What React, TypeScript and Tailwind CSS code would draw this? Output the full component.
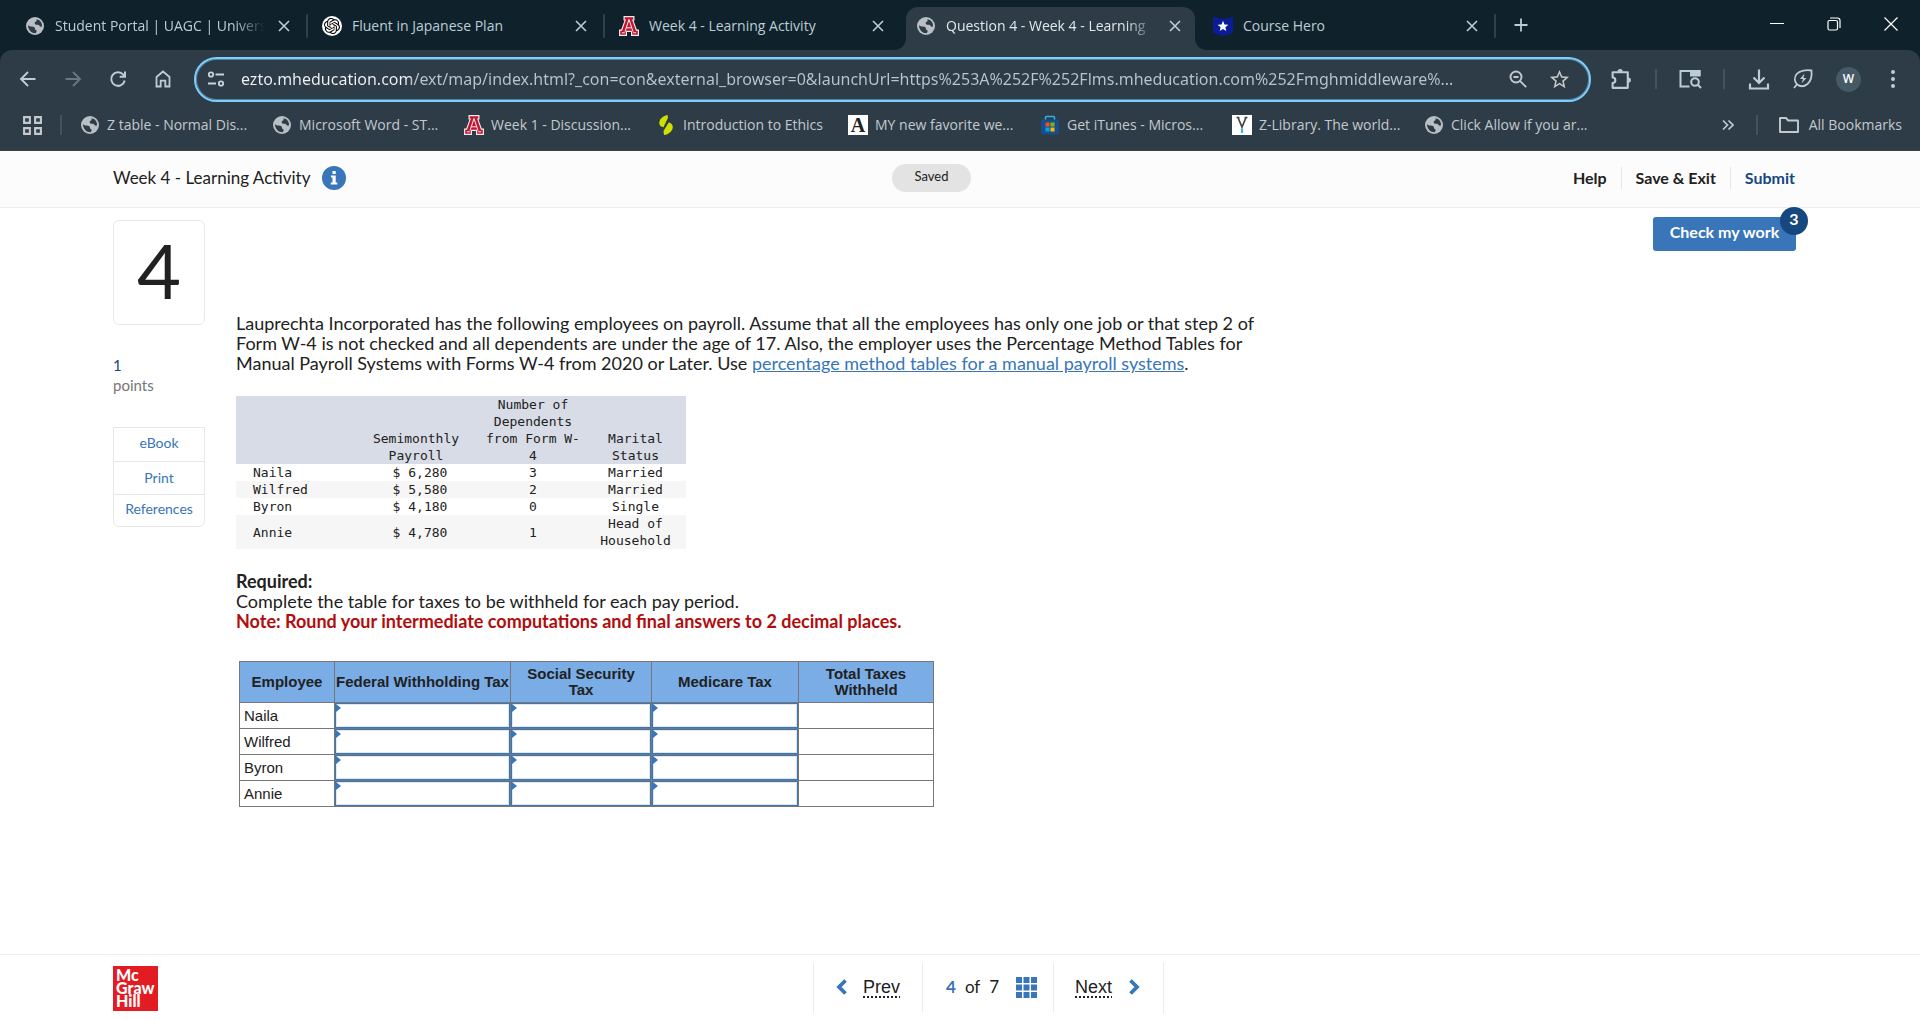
import React from "react";
import { SiOpenai } from "react-icons/si";
import { MdStarOutline } from "react-icons/md";

function Globe() {
  return (
    <svg viewBox="0 0 20 20" className="size-5 shrink-0">
      <circle cx="10" cy="10" r="9" fill="#b9bfc4" />
      <path
        d="M11.500 3.200c2 .3 4 1.500 4.900 3.500.6 1.300.8 2.500.5 3.800-.9.5-1.900.2-2.400-.6-.4-.8-1.100-1.100-2-1.100-1.500 0-2.700-.3-2.800-1.500-.1-1 .6-1.500 1.400-1.700.6-.2.500-1.300.4-2.400zM3 9.200c1.500 1.200 3.300 1.300 5 1.500 1.500.2 2 1 1.900 2 0 1 .8 1.200 1.400 1.600.7.500.3 1.600-.6 2.900-4.200.2-7.600-3.200-7.700-8z"
        fill="#2d3c47"
      />
    </svg>
  );
}

function ArizonaMark() {
  return (
    <svg viewBox="0 0 20 20" className="size-5 shrink-0" aria-hidden="true">
      <path d="M4.500 0h11v4.500h-1l3.300 9H20V20h-8v-4H8v4H0v-6.500h2.200l3.300-9h-1z" fill="#e9edf0" />
      <path d="M5.700 1.200h8.600v2.200H13l4 11.300h1.800v4.100h-5.600v-4H6.800v4H1.200v-4.100H3L7 3.400H5.700z" fill="#c4142e" />
      <path d="M10 3.500L6 15.500M10 3.500l4 12M7.500 11.800h5M2.800 16.800h3M14.200 16.800h3" stroke="#f4f4f4" strokeWidth="1" fill="none" />
    </svg>
  );
}

function CourseHero() {
  return (
    <svg viewBox="0 0 20 20" className="size-5 shrink-0">
      <path d="M0 1l10 2 10-2v16l-10 3-10-3z" fill="#0a1c96" />
      <path d="M10 4.800l1.500 3.600 3.900.3-3 2.500.9 3.800-3.300-2-3.300 2 .9-3.800-3-2.500 3.900-.3z" fill="#fff" />
    </svg>
  );
}

function SophiaLeaf() {
  return (
    <svg viewBox="0 0 20 20" className="size-5 shrink-0">
      <path d="M11.500 0C6.500 1 3 4.500 3.300 8.500c.2 2 1.500 3.300 4.200 3.800L12 2.800z" fill="#d0df00" />
      <path d="M8 20c5.500-.6 9-4.500 8.700-8.500-.2-2.200-1.500-3.400-4-4L7.500 16z" fill="#d0df00" />
    </svg>
  );
}

function StoreIcon() {
  return (
    <svg viewBox="0 0 20 20" className="size-5 shrink-0">
      <path d="M5.500 6V2.500a1 1 0 0 1 1-1h7a1 1 0 0 1 1 1V6" fill="none" stroke="#2fb4e8" strokeWidth="1.500" />
      <path d="M1 4.500h18V17a2.500 2.500 0 0 1-2.500 2.500h-13A2.500 2.500 0 0 1 1 17z" fill="#174f8c" />
      <path d="M5.500 7.500h4v4h-4z" fill="#f25022" />
      <path d="M10.500 7.500h4v4h-4z" fill="#7fba00" />
      <path d="M5.500 12.500h4v4h-4z" fill="#00a4ef" />
      <path d="M10.500 12.500h4v4h-4z" fill="#ffb900" />
    </svg>
  );
}

function LetterA() {
  return (
    <span className="flex size-5 shrink-0 items-center justify-center bg-white font-['Liberation_Serif',serif] text-xl font-bold text-[#222]">
      A
    </span>
  );
}

function ZLibrary() {
  return (
    <svg viewBox="0 0 20 20" className="size-5 shrink-0">
      <path d="M0 0h20v20H0z" fill="#fff" />
      <path d="M4.500 2.500h3M12.500 2.500h3M6 2.500l4 9.500 4-9.500" fill="none" stroke="#444" strokeWidth="1.700" />
      <path d="M10 13.500V18" stroke="#49afd0" strokeWidth="2.200" />
    </svg>
  );
}

function CloseX() {
  return (
    <svg viewBox="0 0 12 12" className="size-3" fill="none" stroke="currentColor" strokeWidth="1.600">
      <path d="M1 1l10 10M11 1L1 11" />
    </svg>
  );
}

const tabs = [
  { title: "Student Portal | UAGC | Universi", icon: <Globe />, sep: true },
  {
    title: "Fluent in Japanese Plan",
    icon: (
      <span className="flex size-5 shrink-0 items-center justify-center rounded-full bg-white text-black">
        <SiOpenai className="size-4" />
      </span>
    ),
    sep: true,
  },
  { title: "Week 4 - Learning Activity", icon: <ArizonaMark /> },
  { title: "Question 4 - Week 4 - Learning", icon: <Globe />, active: true },
  { title: "Course Hero", icon: <CourseHero />, sep: true },
];

const bookmarks = [
  { title: "Z table - Normal Dis...", icon: <Globe /> },
  { title: "Microsoft Word - ST...", icon: <Globe /> },
  { title: "Week 1 - Discussion...", icon: <ArizonaMark /> },
  { title: "Introduction to Ethics", icon: <SophiaLeaf /> },
  { title: "MY new favorite we...", icon: <LetterA /> },
  { title: "Get iTunes - Micros...", icon: <StoreIcon /> },
  { title: "Z-Library. The world...", icon: <ZLibrary /> },
  { title: "Click Allow if you ar...", icon: <Globe /> },
];

const payroll = [
  ["Naila", "$ 6,280", "3", "Married"],
  ["Wilfred", "$ 5,580", "2", "Married"],
  ["Byron", "$ 4,180", "0", "Single"],
  ["Annie", "$ 4,780", "1", "Head of Household"],
];

const employees = ["Naila", "Wilfred", "Byron", "Annie"];
const taxes = ["Federal Withholding Tax", "Social Security Tax", "Medicare Tax"];

function Tabs() {
  return (
    <div className="flex h-[50px] bg-[#0f222b] pl-[11px] text-sm text-[#bccdd6]">
      {tabs.map((t) => (
        <div key={t.title} className="relative flex w-[297px] min-w-0 items-center pt-[7px]">
          {t.active && (
            <div className="absolute inset-x-1 top-[7px] bottom-0 rounded-t-xl bg-[#2d3c47]">
              <svg viewBox="0 0 12 12" className="absolute bottom-0 -left-3 size-3">
                <path d="M12 0v12H0C7 12 12 7 12 0z" fill="#2d3c47" />
              </svg>
              <svg viewBox="0 0 12 12" className="absolute -right-3 bottom-0 size-3">
                <path d="M0 0v12h12C5 12 0 7 0 0z" fill="#2d3c47" />
              </svg>
            </div>
          )}
          <div className="relative flex w-full items-center pb-[6px] pl-[14px]">
            {t.icon}
            <button
              className={
                "ml-[10px] flex-1 overflow-hidden text-left whitespace-nowrap " +
                (t.active ? "text-[#e2e9ed] " : "") +
                (t.title.length > 26 ? "[mask-image:linear-gradient(90deg,#000_82%,transparent_96%)]" : "")
              }
            >
              {t.title}
            </button>
            <button aria-label={"Close " + t.title} className="mr-[18px] ml-1">
              <CloseX />
            </button>
          </div>
          {t.sep && <span className="absolute top-[14px] right-0 h-6 w-[2px] rounded bg-[#2f414c]" />}
        </div>
      ))}
      <button aria-label="New tab" className="ml-[18px]">
        <svg viewBox="0 0 14 14" className="size-[14px]" fill="none" stroke="currentColor" strokeWidth="1.800">
          <path d="M7 .5v13M.5 7h13" />
        </svg>
      </button>
      <div className="ml-auto flex items-center gap-[43px] pr-[22px] pb-[2px] text-white">
        <button aria-label="Minimize">
          <svg viewBox="0 0 14 14" className="size-[14px]" stroke="currentColor">
            <path d="M0 6.500h14" />
          </svg>
        </button>
        <button aria-label="Restore">
          <svg viewBox="0 0 14 14" className="size-[14px]" fill="none" stroke="currentColor" strokeWidth="1.200">
            <rect x="1" y="3.500" width="9.500" height="9.500" rx="1.500" />
            <path d="M3 1h7.500A2.500 2.500 0 0 1 13 3.500V11" />
          </svg>
        </button>
        <button aria-label="Close window">
          <svg viewBox="0 0 14 14" className="size-[14px]" fill="none" stroke="currentColor" strokeWidth="1.200">
            <path d="M.5.5l13 13M13.500.5l-13 13" />
          </svg>
        </button>
      </div>
    </div>
  );
}

function Toolbar() {
  const nav = "flex size-[45px] shrink-0 items-center justify-center";
  return (
    <div className="flex h-[58px] items-center pr-[15px] pl-[5px] text-[#bccdd6]">
      <button aria-label="Back" className={nav}>
        <svg viewBox="0 0 20 20" className="size-5" fill="none" stroke="currentColor" strokeWidth="1.900">
          <path d="M17.500 10H3.500M10 3l-7 7 7 7" />
        </svg>
      </button>
      <button aria-label="Forward" className={nav + " text-[#687780]"}>
        <svg viewBox="0 0 20 20" className="size-5" fill="none" stroke="currentColor" strokeWidth="1.900">
          <path d="M2.500 10h14M10 3l7 7-7 7" />
        </svg>
      </button>
      <button aria-label="Reload" className={nav}>
        <svg viewBox="0 0 20 20" className="size-5" fill="none" stroke="currentColor" strokeWidth="2">
          <path d="M16.700 11.500A6.800 6.800 0 1 1 15.300 5.700L17 7.500M17 2.500v5.300h-5.300" />
        </svg>
      </button>
      <button aria-label="Home" className={nav}>
        <svg viewBox="0 0 20 20" className="size-5" fill="none" stroke="currentColor" strokeWidth="1.800">
          <path d="M3.500 8L10 2.500 16.500 8v9.500h-4.200v-5.800H7.700v5.800H3.500z" />
        </svg>
      </button>
      <div className="ml-[9px] flex h-[45px] min-w-0 flex-1 items-center rounded-full border-[2px] border-[#7fcdfb] pr-[18px] pl-[10px] ring-1 ring-[#4d83a2] ring-inset">
        <button aria-label="View site information" className="shrink-0">
          <svg viewBox="0 0 20 20" className="size-5" fill="none" stroke="#c9d3d9" strokeWidth="1.800">
            <circle cx="5" cy="5.500" r="2.200" />
            <path d="M9.500 5.500H18M2 14.500h8" />
            <circle cx="15" cy="14.500" r="2.200" />
          </svg>
        </button>
        <input
          aria-label="Address"
          className="ml-[15px] min-w-0 flex-1 bg-[linear-gradient(90deg,#eef3f6_170px,#bcc5cb_170px)] bg-clip-text font-['Noto_Sans',sans-serif] text-base text-transparent outline-none"
          defaultValue="ezto.mheducation.com/ext/map/index.html?_con=con&external_browser=0&launchUrl=https%253A%252F%252Flms.mheducation.com%252Fmghmiddleware%..."
        />
        <button aria-label="Zoom" className="mr-5 ml-4">
          <svg viewBox="0 0 20 20" className="size-5" fill="none" stroke="#c4c9cd" strokeWidth="1.900">
            <circle cx="8" cy="8" r="5.500" />
            <path d="M12.200 12.200l6 6M5.500 8h5" />
          </svg>
        </button>
        <button aria-label="Bookmark this page">
          <MdStarOutline className="size-[23px] text-[#c4c9cd]" />
        </button>
      </div>
      <button aria-label="Extensions" className="ml-[19px]">
        <svg viewBox="0 0 22 22" className="size-[23px]" fill="none" stroke="currentColor" strokeWidth="2" strokeLinejoin="round">
          <path d="M2.500 4H17v15H2.500v-4.700a2.600 2.600 0 0 0 0-5.200z" />
          <path d="M7.200 3.500a2.500 2.500 0 0 1 5 0zM17.500 9a2.500 2.500 0 0 1 0 5z" fill="currentColor" stroke="none" />
        </svg>
      </button>
      <span className="ml-[22px] h-5 w-[2px] bg-[#42535f]" />
      <button aria-label="Search with Lens" className="ml-[21px]">
        <svg viewBox="0 0 24 24" className="size-6" fill="none" stroke="currentColor" strokeWidth="2">
          <path d="M21.500 9V4H2.500v15.500h9" />
          <path d="M12 3h10.500v6.500H12z" fill="currentColor" stroke="none" />
          <circle cx="17" cy="15" r="3.800" />
          <path d="M19.800 17.800l3.200 3.200" />
        </svg>
      </button>
      <span className="ml-[21px] h-5 w-[2px] bg-[#42535f]" />
      <button aria-label="Downloads" className="ml-[22px]">
        <svg viewBox="0 0 24 24" className="size-6" fill="none" stroke="currentColor" strokeWidth="2.200">
          <path d="M12 2.500v13M6.500 10.500l5.500 5.500 5.500-5.500M3 16.500v5h18v-5" />
        </svg>
      </button>
      <button aria-label="Memory saver" className="ml-[21px]">
        <svg viewBox="0 0 22 22" className="size-[22px]" fill="none" stroke="currentColor" strokeWidth="1.800">
          <path d="M19.500 2.500c-5-.8-12 0-14.800 3.500-2.700 3.400-2.300 7.500.2 10.300 3.300 2.600 7.300 2.400 10.600-.3 3.500-3 4.500-8.500 4-13.500zM5 16.300L2 20" />
          <path d="M12.500 5.500L8 11h3l-1.500 4.500L14.500 10h-3z" fill="currentColor" stroke="none" />
        </svg>
      </button>
      <button className="ml-[22px] flex size-[25px] items-center justify-center rounded-full bg-[#465a66] text-xs font-semibold text-white">W</button>
      <button aria-label="Menu" className="ml-[20px]">
        <svg viewBox="0 0 24 24" className="size-6" fill="currentColor">
          <circle cx="12" cy="5" r="2" />
          <circle cx="12" cy="12" r="2" />
          <circle cx="12" cy="19" r="2" />
        </svg>
      </button>
    </div>
  );
}

function Bookmarks() {
  return (
    <div className="flex h-[43px] items-center border-b border-[#3a3f4b] pr-[18px] pb-2 pl-[22px] text-sm text-[#c4c9cd]">
      <button aria-label="Apps">
        <svg viewBox="0 0 20 20" className="size-[21px]" fill="none" stroke="currentColor" strokeWidth="2">
          <path d="M2 2h5.500v5.500H2zM12.500 2H18v5.500h-5.500zM2 12.500h5.500V18H2zM12.500 12.500H18V18h-5.500z" />
        </svg>
      </button>
      <span className="mr-[18px] ml-[17px] h-5 w-[2px] shrink-0 bg-[#42535f]" />
      {bookmarks.map((b) => (
        <a key={b.title} href="#" className="flex w-[192px] min-w-0 items-center gap-[7px] whitespace-nowrap">
          {b.icon}
          {b.title}
        </a>
      ))}
      <button aria-label="More bookmarks" className="ml-auto">
        <svg viewBox="0 0 12 12" className="size-3" fill="none" stroke="currentColor" strokeWidth="1.700">
          <path d="M1 1.500L5.500 6 1 10.500M6.500 1.500L11 6l-4.500 4.500" />
        </svg>
      </button>
      <span className="mr-5 ml-[22px] h-5 w-[2px] bg-[#42535f]" />
      <button className="flex items-center gap-[9px]">
        <svg viewBox="0 0 22 18" className="h-[18px] w-[22px]" fill="none" stroke="currentColor" strokeWidth="1.900" strokeLinejoin="round">
          <path d="M2 2h6l2.200 2.500H20V16H2z" />
        </svg>
        All Bookmarks
      </button>
    </div>
  );
}

function PayrollTable() {
  return (
    <table className="mt-[23px] w-[450px] table-fixed border-collapse text-center font-['DejaVu_Sans_Mono',monospace] text-[13px] leading-[17px]">
      <colgroup>
        <col className="w-[115px]" />
        <col className="w-[130px]" />
        <col className="w-[104px]" />
        <col className="w-[101px]" />
      </colgroup>
      <thead className="bg-[#d8dce6] align-bottom">
        <tr>
          <td />
          <th className="px-5 font-normal">Semimonthly Payroll</th>
          <th className="px-1 font-normal">
            Number of Dependents from&nbsp;Form&nbsp;W-
            <br />4
          </th>
          <th className="px-5 font-normal">Marital Status</th>
        </tr>
      </thead>
      <tbody>
        {payroll.map((r) => (
          <tr key={r[0]} className="even:bg-[#f6f6f6]">
            <th scope="row" className="pl-[17px] text-left font-normal">{r[0]}</th>
            <td className="pl-2">{r[1]}</td>
            <td>{r[2]}</td>
            <td className="px-3">{r[3]}</td>
          </tr>
        ))}
      </tbody>
    </table>
  );
}

function TaxTable() {
  return (
    <table className="mt-[30px] ml-[3px] w-[695px] table-fixed border-collapse font-['Liberation_Sans',Arial,sans-serif] text-[15px] leading-4">
      <colgroup>
        <col className="w-[95px]" />
        <col className="w-[176px]" />
        <col className="w-[141px]" />
        <col className="w-[147px]" />
        <col className="w-[135px]" />
      </colgroup>
      <thead className="bg-[#7aace6]">
        <tr className="h-[41px]">
          <th className="border border-[#777]">Employee</th>
          <th className="border border-[#777] whitespace-nowrap">Federal Withholding Tax</th>
          <th className="border border-[#777] px-4">Social Security Tax</th>
          <th className="border border-[#777]">Medicare Tax</th>
          <th className="border border-[#777] px-5">Total Taxes Withheld</th>
        </tr>
      </thead>
      <tbody>
        {employees.map((e) => (
          <tr key={e} className="h-[26px]">
            <th scope="row" className="border border-[#777] pl-1 text-left font-normal">{e}</th>
            {taxes.map((t) => (
              <td key={t} className="relative border border-[#777] p-0">
                <input
                  aria-label={e + " " + t}
                  className="block h-[25px] w-full border border-[#3d76b5] bg-white px-2 ring-1 ring-[#dce9f3] outline-none ring-inset"
                />
                <svg viewBox="0 0 6 8" className="absolute top-px left-0 h-2 w-[6px]">
                  <path d="M0 0h1l5 4-5 4H0z" fill="#3875b9" />
                </svg>
              </td>
            ))}
            <td className="border border-[#777]" />
          </tr>
        ))}
      </tbody>
    </table>
  );
}

export default function App() {
  return (
    <div className="flex min-h-screen flex-col bg-white font-['Lato',sans-serif] text-[#212121]">
      <div className="bg-[#0f222b] font-['Open_Sans','Noto_Sans',sans-serif]">
        <Tabs />
        <div className="rounded-t-xl bg-[#2d3c47]">
          <Toolbar />
          <Bookmarks />
        </div>
      </div>

      <header className="flex h-[57px] items-center border-b border-[#ececec] bg-[#fcfcfc] pr-[125px] pb-[2px] pl-[113px]">
        <div className="flex w-[779px] items-center gap-3">
          <h1 className="text-[17px]">Week 4 - Learning Activity</h1>
          <button aria-label="Information">
            <svg viewBox="0 0 24 24" className="size-6">
              <circle cx="12" cy="12" r="12" fill="#3875b9" />
              <path d="M10.500 5h3.200v3h-3.200zM9 9.500h4.700v7h1.600V18.500H8.800v-2h1.700v-5H9z" fill="#fff" />
            </svg>
          </button>
        </div>
        <span className="flex h-7 w-[79px] items-center justify-center rounded-full bg-[#e3e3e3] pb-[2px] text-[13px]">Saved</span>
        <nav className="ml-auto flex pb-px text-base leading-[22px] font-bold">
          <a href="#" className="pr-[14px]">Help</a>
          <a href="#" className="border-l border-[#e6e6e6] px-[14px]">Save &amp; Exit</a>
          <a href="#" className="border-l border-[#e6e6e6] pl-[14px] text-[#16477e]">Submit</a>
        </nav>
      </header>

      <main className="flex flex-1 items-start pr-[124px] pl-[113px]">
        <aside className="mt-3 w-[92px] shrink-0">
          <div className="flex h-[105px] items-center justify-center rounded-md border border-[#e8e8e8] pb-[6px] text-[76px]">4</div>
          <div className="mt-[30px] text-[15px] leading-5">
            <div className="text-[#16477e]">1</div>
            <div className="text-[#767676]">points</div>
          </div>
          <div className="mt-[32px] rounded-b-md border border-[#e6e6e6] text-center text-sm text-[#3875b9]">
            <a href="#" className="block h-[34px] border-b border-[#e6e6e6] leading-[30px]">eBook</a>
            <a href="#" className="block h-[33px] border-b border-[#e6e6e6] leading-[31px]">Print</a>
            <a href="#" className="block h-[31px] leading-7">References</a>
          </div>
        </aside>

        <article className="mt-[105px] ml-[31px] max-w-[1040px] text-lg leading-5">
          <p>
            Lauprechta Incorporated has the following employees on payroll. Assume that all the employees has only one job or
            that step 2 of Form W-4 is not checked and all dependents are under the age of 17. Also, the employer uses the
            Percentage Method Tables for Manual Payroll Systems with Forms W-4 from 2020 or Later. Use{" "}
            <a href="#" className="text-[#3875b9] underline">percentage method tables for a manual payroll systems</a>.
          </p>
          <PayrollTable />
          <p className="mt-[22px] font-bold">Required:</p>
          <p>Complete the table for taxes to be withheld for each pay period.</p>
          <p className="font-bold text-[#b10d0d]">
            Note: Round your intermediate computations and final answers to 2 decimal places.
          </p>
          <TaxTable />
        </article>

        <div className="relative mt-[9px] ml-auto shrink-0">
          <button className="h-[34px] w-[143px] rounded-[3px] bg-[#3875b9] pb-1 text-base font-bold text-white">Check my work</button>
          <span className="absolute -top-[10px] -right-3 flex size-7 items-center justify-center rounded-full bg-[#16477e] pb-1 text-base font-bold text-white">
            3
          </span>
        </div>
      </main>

      <footer className="flex h-[66px] items-center border-t border-[#ececec] pl-[113px]">
        <div className="w-[700px] pt-[2px]">
          <a href="#" className="block size-[45px] bg-[#e31b23] pt-[2px] pl-[3px] text-base leading-[13px] font-black text-white">
            Mc
            <br />
            Graw
            <br />
            Hill
          </a>
        </div>
        <nav className="flex h-[50px] border-x border-[#ececec] pb-px font-['Liberation_Sans',Arial,sans-serif] text-lg">
          <a href="#" className="flex w-[109px] items-center gap-[16px] border-r border-[#ececec] pl-[22px]">
            <svg viewBox="0 0 11 16" className="h-4 w-[11px]" fill="none" stroke="#3875b9" strokeWidth="3.800">
              <path d="M9.500 1.500L3 8l6.500 6.500" />
            </svg>
            <span className="underline decoration-dotted decoration-2 underline-offset-3">Prev</span>
          </a>
          <div className="flex w-[131px] items-center gap-[9px] border-r border-[#ececec] pl-[23px] font-['Lato',sans-serif] text-[17px]">
            <b className="text-[#3875b9]">4</b>
            <span>of</span>
            <span>7</span>
            <button aria-label="Question list" className="ml-2">
              <svg viewBox="0 0 21 21" className="size-[21px]" fill="#3875b9">
                <path d="M0 0h6v6H0zM7.500 0h6v6h-6zM15 0h6v6h-6zM0 7.500h6v6H0zM7.500 7.500h6v6h-6zM15 7.500h6v6h-6zM0 15h6v6H0zM7.500 15h6v6h-6zM15 15h6v6h-6z" />
              </svg>
            </button>
          </div>
          <a href="#" className="flex w-[109px] items-center gap-[17px] pl-[21px]">
            <span className="underline decoration-dotted decoration-2 underline-offset-3">Next</span>
            <svg viewBox="0 0 11 16" className="h-4 w-[11px]" fill="none" stroke="#3875b9" strokeWidth="3.800">
              <path d="M1.500 1.500L8 8l-6.500 6.500" />
            </svg>
          </a>
        </nav>
      </footer>
    </div>
  );
}
